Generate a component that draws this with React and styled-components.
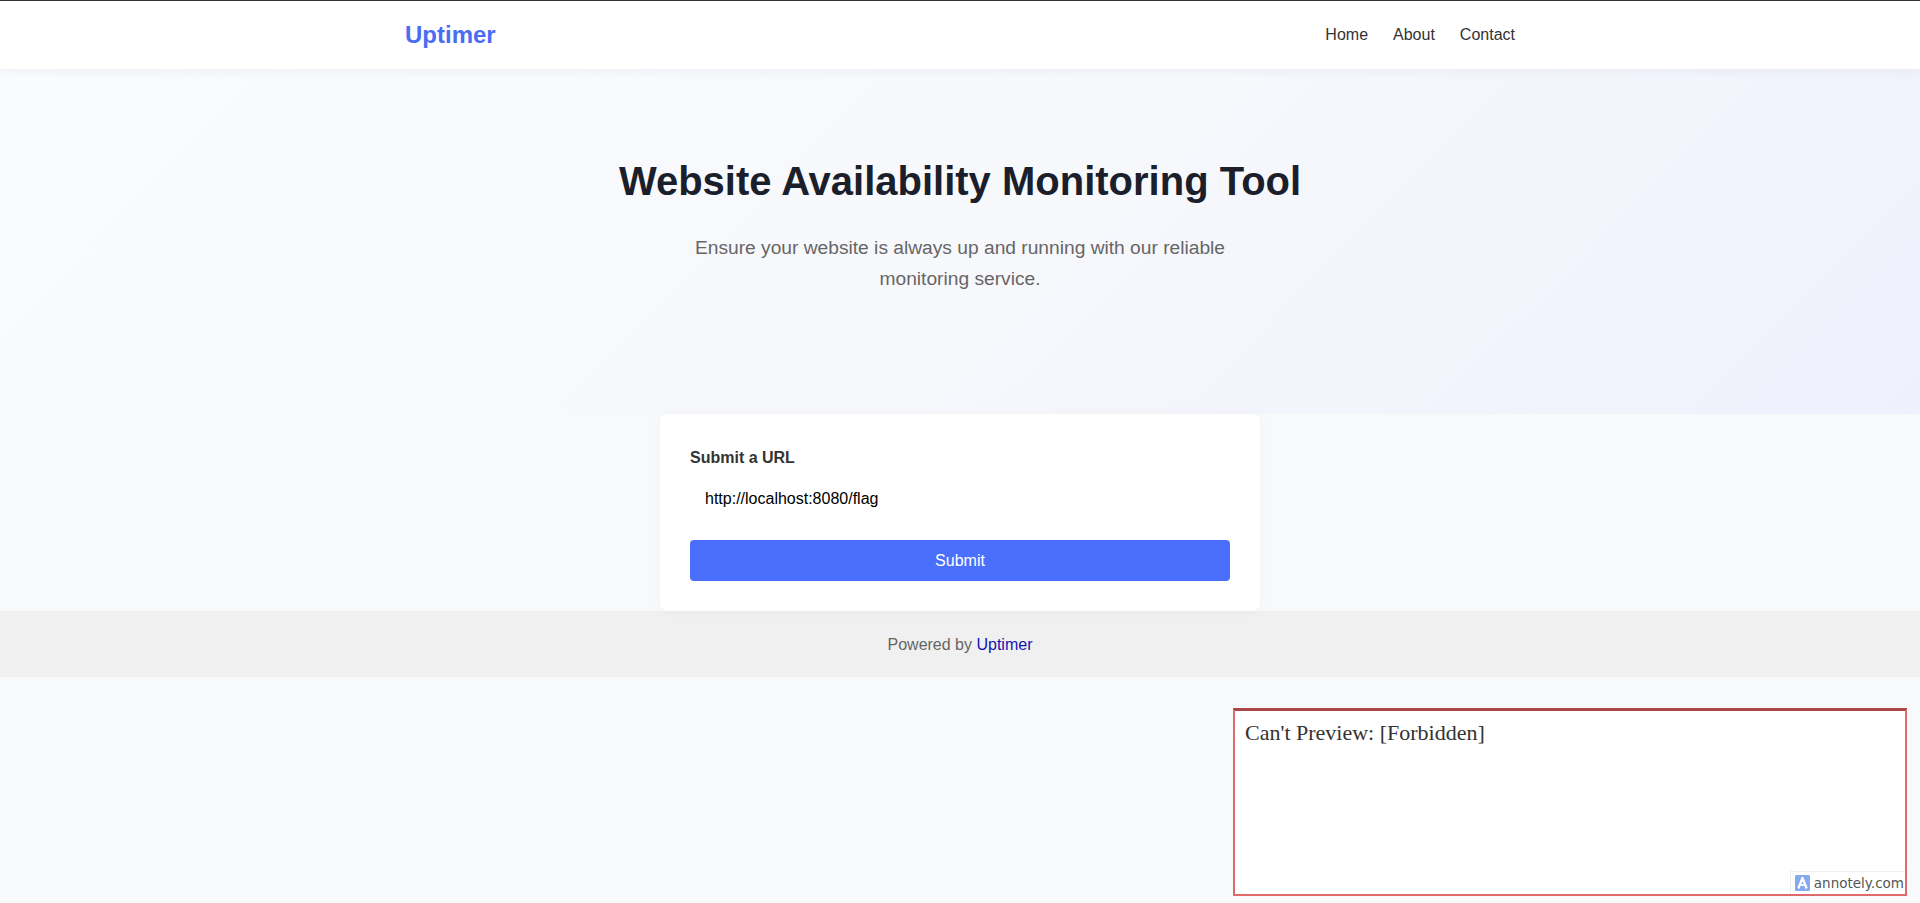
import React from "react";
import styled, { createGlobalStyle } from "styled-components";

const COLORS = {
  brand: "#4a6cf2",
  button: "#4a6ffc",
  text: "#333333",
  heading: "#1b1f2b",
  muted: "#666666",
  page: "#f8f9fa",
  footer: "#f0f0f0",
  link: "#1414b4",
};

const GlobalStyle = createGlobalStyle`
  * { box-sizing: border-box; }
  body {
    margin: 0;
    background: ${COLORS.page};
    font-family: "Liberation Sans", Arial, sans-serif;
    color: ${COLORS.text};
  }
`;

const Header = styled.header`
  background: #fff;
  border-top: 1px solid #333;
  box-shadow: 0 2px 10px rgba(20, 30, 80, 0.05);
  position: relative;
  z-index: 1;
`;

const Container = styled.div`
  width: 1110px;
  margin: 0 auto;
`;

const HeaderInner = styled(Container)`
  height: 68px;
  display: flex;
  align-items: center;
  justify-content: space-between;
`;

const Logo = styled.a`
  font-size: 24px;
  font-weight: 700;
  color: ${COLORS.brand};
  text-decoration: none;
`;

const Nav = styled.nav`
  display: flex;
  gap: 25px;
`;

const NavLink = styled.a`
  font-size: 16px;
  color: ${COLORS.text};
  text-decoration: none;
`;

const Hero = styled.section`
  background: linear-gradient(135deg, #fafbfd 0%, #f7f8fc 55%, #eef0fc 100%);
  padding: 88px 0 120px;
  text-align: center;
`;

const Title = styled.h1`
  margin: 0;
  font-size: 40px;
  line-height: 48px;
  font-weight: 700;
  color: ${COLORS.heading};
`;

const Lead = styled.p`
  max-width: 600px;
  margin: 28px auto 0;
  font-size: 19.2px;
  line-height: 30.6px;
  color: ${COLORS.muted};
`;

const FormSection = styled.section`
  display: flex;
  justify-content: center;
  background: ${COLORS.page};
`;

const Card = styled.form`
  width: 600px;
  padding: 32px 30px 30px;
  background: #fff;
  border-radius: 8px;
  box-shadow: 0 0 12px rgba(0, 0, 0, 0.03);
`;

const Label = styled.label`
  display: block;
  margin-bottom: 8px;
  font-size: 16px;
  line-height: 24px;
  font-weight: 700;
  color: ${COLORS.text};
`;

const Input = styled.input`
  display: block;
  width: 100%;
  height: 42px;
  margin-bottom: 20px;
  padding: 0 15px;
  border: none;
  outline: none;
  background: #fff;
  font-family: inherit;
  font-size: 16px;
  color: #000;
`;

const Button = styled.button`
  display: block;
  width: 100%;
  height: 41px;
  border: none;
  border-radius: 4px;
  background: ${COLORS.button};
  color: #fff;
  font-family: inherit;
  font-size: 16px;
  cursor: pointer;
`;

const Footer = styled.footer`
  background: ${COLORS.footer};
  padding: 22px 0 20px;
  line-height: 24px;
  text-align: center;
  font-size: 16px;
  color: ${COLORS.muted};

  a {
    color: ${COLORS.link};
    text-decoration: none;
  }
`;

const Preview = styled.div`
  position: fixed;
  left: 1233px;
  top: 708px;
  width: 674px;
  height: 188px;
  background: #fff;
  border: 2px solid #e06a6a;
  border-top: 3px solid #a94646;
  padding: 9px 10px;
  font-family: "Liberation Serif", "Times New Roman", serif;
  font-size: 22px;
  line-height: 26px;
  color: #333;
`;

const Watermark = styled.div`
  position: absolute;
  right: 0;
  bottom: 0;
  display: flex;
  align-items: center;
  gap: 4px;
  padding: 3px 1px 3px 4px;
  background: #fff;
  border-top: 1px solid #f0f0f0;
  border-left: 1px solid #f0f0f0;
  font-family: "DejaVu Sans", Verdana, sans-serif;
  font-size: 13.5px;
  line-height: 16px;
  color: #555;
`;

function AnnotelyMark() {
  return (
    <svg width="15" height="16" viewBox="0 0 15 16">
      <rect width="15" height="16" rx="1.5" fill="#86aaf0" />
      <path d="M3.3 13.5 L7.5 3 L11.7 13.5" fill="none" stroke="#fff" strokeWidth="2.2" strokeLinejoin="round" />
      <path d="M5.2 10 H9.8" stroke="#fff" strokeWidth="1.8" />
    </svg>
  );
}

export default function App() {
  return (
    <>
      <GlobalStyle />
      <Header>
        <HeaderInner>
          <Logo href="#">Uptimer</Logo>
          <Nav>
            <NavLink href="#">Home</NavLink>
            <NavLink href="#">About</NavLink>
            <NavLink href="#">Contact</NavLink>
          </Nav>
        </HeaderInner>
      </Header>

      <Hero>
        <Title>Website Availability Monitoring Tool</Title>
        <Lead>Ensure your website is always up and running with our reliable monitoring service.</Lead>
      </Hero>

      <FormSection>
        <Card onSubmit={(e) => e.preventDefault()}>
          <Label htmlFor="url">Submit a URL</Label>
          <Input id="url" type="text" defaultValue="http://localhost:8080/flag" />
          <Button type="submit">Submit</Button>
        </Card>
      </FormSection>

      <Footer>
        Powered by <a href="#">Uptimer</a>
      </Footer>

      <Preview>
        Can&apos;t Preview: [Forbidden]
        <Watermark>
          <AnnotelyMark />
          annotely.com
        </Watermark>
      </Preview>
    </>
  );
}
